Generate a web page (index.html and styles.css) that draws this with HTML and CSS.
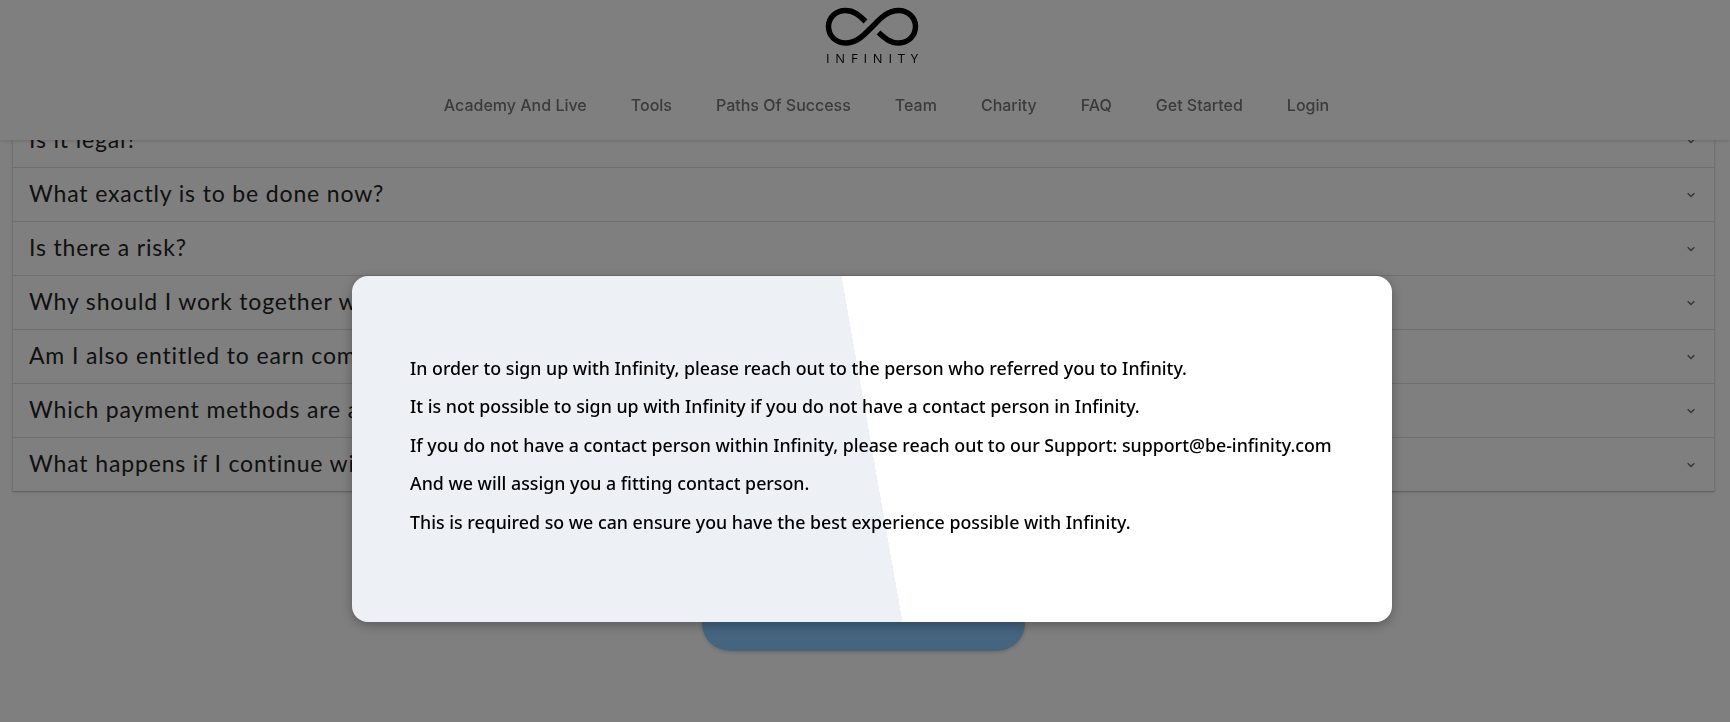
FILE: index.html
```html
<!DOCTYPE html>
<html lang="en">
<head>
    <meta charset="UTF-8">
    <meta name="viewport" content="width=device-width, initial-scale=1.0">
    <title>Infinity - FAQ</title>
    <link rel="stylesheet" href="styles.css">
</head>
<body>
    <header class="site-header">
        <a class="logo" href="#">
            <svg class="logo-mark" width="96" height="42" viewBox="0 0 96 42" fill="none" stroke="#000" stroke-width="5.500">
                <path d="M41.500 15.500C35 9 30 4.500 21.500 4.500C11.500 4.500 4.500 12 4.500 20.500C4.500 29.500 11.500 37 21.500 37C33 37 40 29 48 21C56 13 63 4.500 74.500 4.500C84.500 4.500 91.500 12 91.500 20.500C91.500 29.500 84.500 37 74.500 37C66 37 60.500 32 54.500 26.500"/>
            </svg>
            <span class="logo-text">INFINITY</span>
        </a>
        <nav class="main-nav">
            <a href="#">Academy And Live</a>
            <a href="#">Tools</a>
            <a href="#">Paths Of Success</a>
            <a href="#">Team</a>
            <a href="#">Charity</a>
            <a href="#">FAQ</a>
            <a href="#">Get Started</a>
            <a href="#">Login</a>
        </nav>
    </header>

    <main class="content">
        <section class="faq">
            <div class="faq-row"><h3>Is it legal?</h3><svg class="chevron" width="8" height="6" viewBox="0 0 8 6"><path d="M.7 1.200 4 4.500 7.300 1.200"/></svg></div>
            <div class="faq-row"><h3>What exactly is to be done now?</h3><svg class="chevron" width="8" height="6" viewBox="0 0 8 6"><path d="M.7 1.200 4 4.500 7.300 1.200"/></svg></div>
            <div class="faq-row"><h3>Is there a risk?</h3><svg class="chevron" width="8" height="6" viewBox="0 0 8 6"><path d="M.7 1.200 4 4.500 7.300 1.200"/></svg></div>
            <div class="faq-row"><h3>Why should I work together with Infinity?</h3><svg class="chevron" width="8" height="6" viewBox="0 0 8 6"><path d="M.7 1.200 4 4.500 7.300 1.200"/></svg></div>
            <div class="faq-row"><h3>Am I also entitled to earn commissions?</h3><svg class="chevron" width="8" height="6" viewBox="0 0 8 6"><path d="M.7 1.200 4 4.500 7.300 1.200"/></svg></div>
            <div class="faq-row"><h3>Which payment methods are accepted?</h3><svg class="chevron" width="8" height="6" viewBox="0 0 8 6"><path d="M.7 1.200 4 4.500 7.300 1.200"/></svg></div>
            <div class="faq-row"><h3>What happens if I continue with Infinity?</h3><svg class="chevron" width="8" height="6" viewBox="0 0 8 6"><path d="M.7 1.200 4 4.500 7.300 1.200"/></svg></div>
        </section>
        <a class="cta" href="#"></a>
    </main>

    <div class="overlay">
        <article class="modal">
            <p>In order to sign up with Infinity, please reach out to the person who referred you to Infinity.</p>
            <p>It is not possible to sign up with Infinity if you do not have a contact person in Infinity.</p>
            <p>If you do not have a contact person within Infinity, please reach out to our Support: support@be-infinity.com</p>
            <p>And we will assign you a fitting contact person.</p>
            <p>This is required so we can ensure you have the best experience possible with Infinity.</p>
        </article>
    </div>
</body>
</html>
```

FILE: styles.css
```css
html, body{
    margin: 0;
    height: 722px;
    overflow: hidden;
    background-color: #fff;
}

.site-header{
    position: fixed;
    top: 0;
    left: 0;
    right: 0;
    height: 140px;
    z-index: 2;
    background-color: #fff;
    box-shadow: 0 1px 4px rgba(0, 0, 0, .16);
    display: flex;
    flex-direction: column;
    align-items: center;
}

.logo{
    display: flex;
    flex-direction: column;
    align-items: center;
    padding-top: 6px;
    margin-left: 14px;
    text-decoration: none;
    color: #000;
}

.logo-mark{
    display: block;
}

.logo-text{
    font-family: "Open Sans", sans-serif;
    font-size: 13px;
    line-height: 16px;
    letter-spacing: 5.800px;
    margin-right: -5.800px;
    margin-top: 2px;
}

.main-nav{
    display: flex;
    gap: 44px;
    margin-top: 29px;
    margin-left: 43px;
}

.main-nav a{
    font-family: Inter, sans-serif;
    font-size: 16px;
    font-weight: 500;
    line-height: 20px;
    color: #777;
    text-decoration: none;
}

.content{
    padding: 114px 15px 0 12px;
}

.faq{
    border-left: 1px solid #e4e4e4;
    border-right: 1px solid #e4e4e4;
    border-bottom: 1px solid #c4c4c4;
    box-shadow: 0 1px 3px rgba(0, 0, 0, .12);
}

.faq-row{
    height: 53px;
    padding: 0 19px 0 16px;
    display: flex;
    align-items: center;
    justify-content: space-between;
    border-bottom: 1px solid #ddd;
}

.faq-row:last-child{
    border-bottom: none;
}

.faq-row h3{
    margin: 0 0 4px;
    font-family: Lato, sans-serif;
    font-size: 23px;
    font-weight: 400;
    letter-spacing: .85px;
    color: #222;
}

.chevron{
    fill: none;
    stroke: #666;
    stroke-width: 1.300;
}

.cta{
    display: block;
    width: 323px;
    height: 79px;
    margin: 80px auto 0;
    border-radius: 28px;
    background-color: #8ac9ff;
    box-shadow: 0 1px 4px rgba(0, 0, 0, .2);
}

.overlay{
    position: fixed;
    top: 0;
    left: 0;
    right: 0;
    bottom: 0;
    z-index: 5;
    background-color: rgba(0, 0, 0, .5);
}

.modal{
    position: absolute;
    left: 352px;
    top: 276px;
    width: 1040px;
    height: 346px;
    box-sizing: border-box;
    padding: 73px 58px 0;
    border-radius: 16px;
    background: linear-gradient(80deg, #edf0f5 50%, #fff 50%);
    box-shadow: 0 3px 12px rgba(0, 0, 0, .3);
}

.modal p{
    margin: 0;
    font-family: "Noto Sans", sans-serif;
    font-size: 17.800px;
    font-weight: 500;
    line-height: 38.400px;
    white-space: nowrap;
    color: #000;
}
```
